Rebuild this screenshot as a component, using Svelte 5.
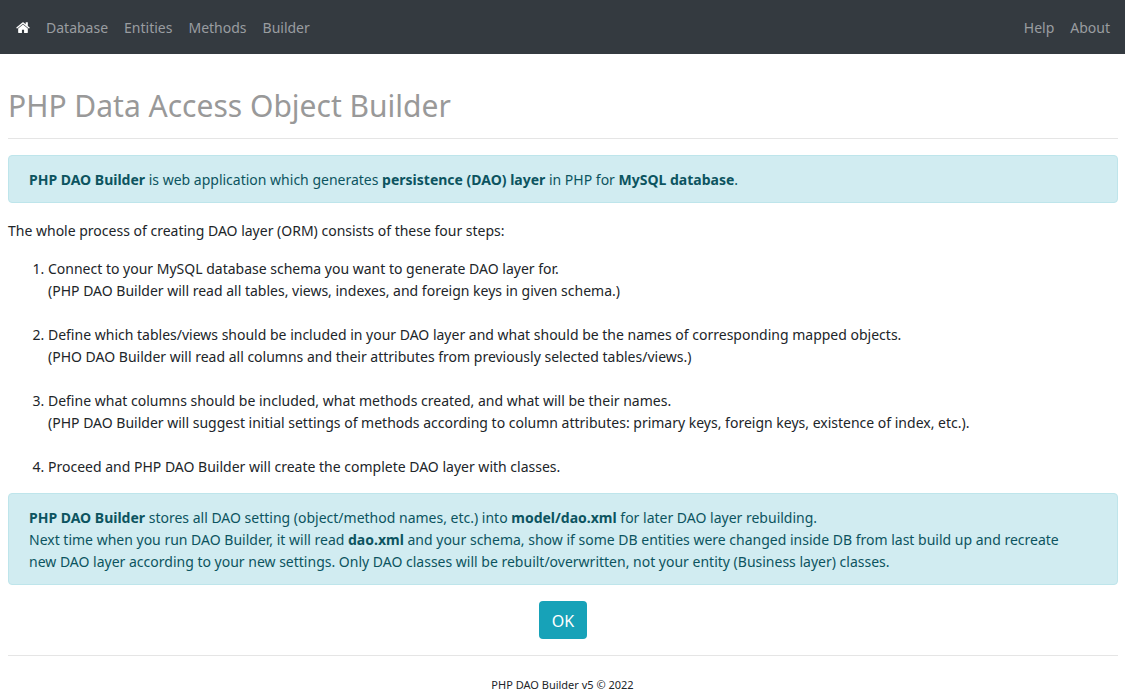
<script lang="ts">
  const steps = [
    ['Connect to your MySQL database schema you want to generate DAO layer for.', '(PHP DAO Builder will read all tables, views, indexes, and foreign keys in given schema.)'],
    ['Define which tables/views should be included in your DAO layer and what should be the names of corresponding mapped objects.', '(PHO DAO Builder will read all columns and their attributes from previously selected tables/views.)'],
    ['Define what columns should be included, what methods created, and what will be their names.', '(PHP DAO Builder will suggest initial settings of methods according to column attributes: primary keys, foreign keys, existence of index, etc.).'],
    ['Proceed and PHP DAO Builder will create the complete DAO layer with classes.']
  ];
  const sections = ['Database', 'Entities', 'Methods', 'Builder'];
  const extras = ['Help', 'About'];
</script>

<nav>
  <div class="links">
    <a class="home" href="#home" aria-label="Home">
      <svg viewBox="0 0 1664 1312" width="14" height="11" aria-hidden="true">
        <path fill="currentColor" d="M1408 768v480q0 26-19 45t-45 19H960V928H704v384H320q-26 0-45-19t-19-45V768q0-1 .5-3t.5-3l575-474 575 474q1 2 1 6zm223-69l-62 74q-8 9-21 11h-3q-13 0-21-7L832 200 140 777q-12 8-24 7-13-2-21-11l-62-74q-8-10-7-23.500T37 654L756 55q32-26 76-26t76 26l244 204V64q0-14 9-23t23-9h192q14 0 23 9t9 23v408l219 182q10 8 11 21.500t-7 23.500z" />
      </svg>
    </a>
    {#each sections as item}<a href={`#${item.toLowerCase()}`}>{item}</a>{/each}
  </div>
  <div class="links">
    {#each extras as item}<a href={`#${item.toLowerCase()}`}>{item}</a>{/each}
  </div>
</nav>

<main>
  <h1>PHP Data Access Object Builder</h1>
  <hr />
  <div class="alert">
    <b>PHP DAO Builder</b> is web application which generates <b>persistence (DAO) layer</b> in PHP for <b>MySQL database</b>.
  </div>
  <p>The whole process of creating DAO layer (ORM) consists of these four steps:</p>
  <ol>
    {#each steps as step}
      <li>{step[0]}{#if step[1]}<br />{step[1]}{/if}</li>
    {/each}
  </ol>
  <div class="alert">
    <b>PHP DAO Builder</b> stores all DAO setting (object/method names, etc.) into <b>model/dao.xml</b> for later DAO layer rebuilding.<br />
    Next time when you run DAO Builder, it will read <b>dao.xml</b> and your schema, show if some DB entities were changed inside DB from last build up and recreate new&nbsp;DAO layer according to your new settings. Only DAO classes will be rebuilt/overwritten, not your entity (Business layer) classes.
  </div>
  <div class="action"><button type="button">OK</button></div>
  <hr />
</main>
<footer>PHP DAO Builder v5 © 2022</footer>

<style>
  :global(body) {
    background: #fff;
    color: #212529;
    font: 14px/22px "Segoe UI", "Noto Sans", "Open Sans", sans-serif;
  }
  nav {
    display: flex;
    justify-content: space-between;
    height: 54px;
    padding: 0 7px 0 8px;
    background: #343a40;
  }
  .links { display: flex; align-items: center; }
  .links a { padding: 9px 8px 7px; color: #9a9da0; text-decoration: none; }
  .links .home { color: #fff; }
  main { padding: 32px 7px 0 8px; }
  h1 { margin: 0; color: #999; font-size: 30px; line-height: 40px; font-weight: 400; }
  hr { margin: 12px 0 16px; border: 0; border-top: 1px solid #e5e5e5; }
  .alert {
    padding: 13px 20px 11px;
    margin-bottom: 16px;
    border: 1px solid #bee5eb;
    border-radius: 4px;
    background: #d1ecf1;
    color: #0c5460;
  }
  b { font-weight: 700; }
  p { margin: 17px 0 16px; }
  ol { margin: 0 0 15px; padding-left: 40px; }
  li + li { margin-top: 22px; }
  .action { display: flex; justify-content: center; }
  .action + hr { margin: 16px 0 18px; }
  button {
    padding: 8px 13px 6px;
    border: 0;
    border-radius: 4px;
    background: #17a2b8;
    color: #fff;
    font: inherit;
    font-size: 16px;
    line-height: 24px;
  }
  footer { padding-bottom: 8px; text-align: center; font-size: 11px; line-height: 22px; }
</style>
